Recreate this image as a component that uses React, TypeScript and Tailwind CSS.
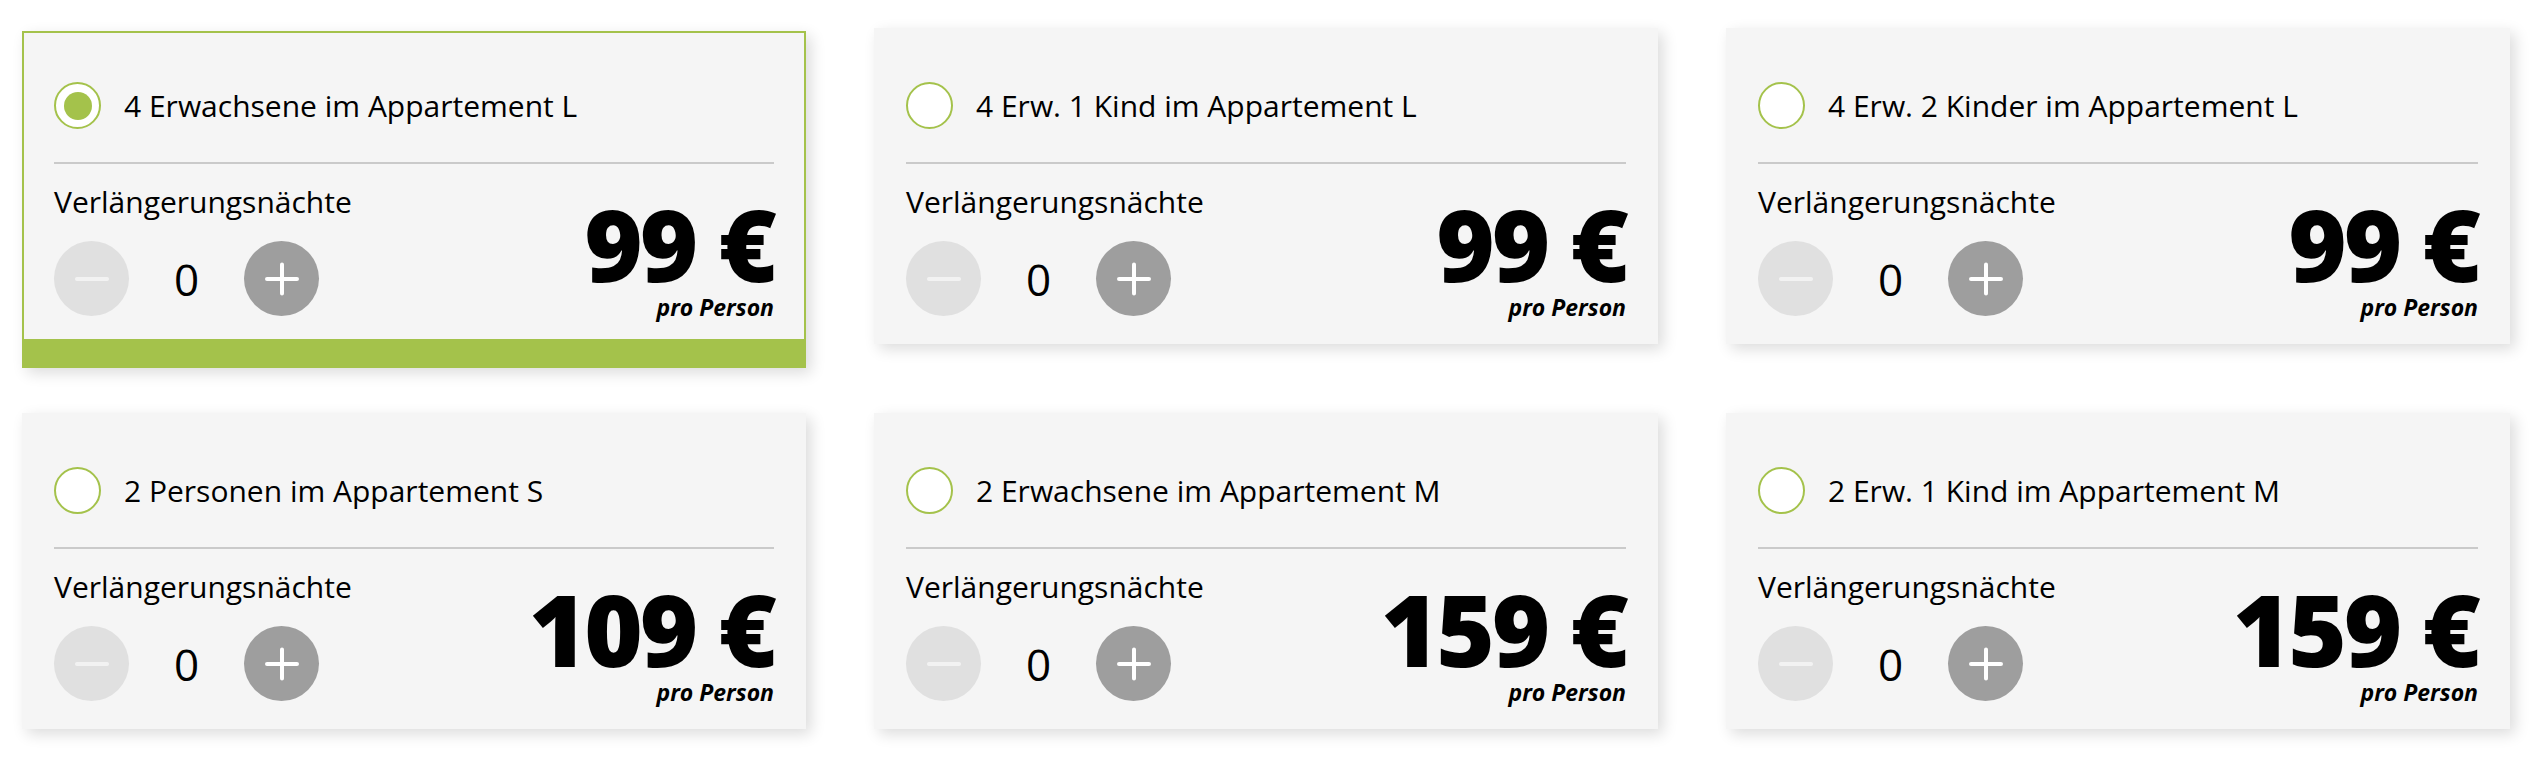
import React from "react";

type Offer = { label: string; price: number; selected?: boolean };

const offers: Offer[] = [
  { label: "4 Erwachsene im Appartement L", price: 99, selected: true },
  { label: "4 Erw. 1 Kind im Appartement L", price: 99 },
  { label: "4 Erw. 2 Kinder im Appartement L", price: 99 },
  { label: "2 Personen im Appartement S", price: 109 },
  { label: "2 Erwachsene im Appartement M", price: 159 },
  { label: "2 Erw. 1 Kind im Appartement M", price: 159 },
];

function Radio({ checked }: { checked?: boolean }) {
  return (
    <span className="flex h-[47px] w-[47px] shrink-0 items-center justify-center rounded-full border-2 border-[#a4c24b] bg-white">
      {checked && <span className="h-[28px] w-[28px] rounded-full bg-[#a4c24b]" />}
    </span>
  );
}

function MinusIcon() {
  return (
    <svg width="34" height="34" viewBox="0 0 34 34" fill="none">
      <path d="M2 17h30" stroke="#f2f2f2" strokeWidth="4" strokeLinecap="round" />
    </svg>
  );
}

function PlusIcon() {
  return (
    <svg width="34" height="34" viewBox="0 0 34 34" fill="none">
      <path d="M2 17h30M17 2.5v29" stroke="#ffffff" strokeWidth="4" strokeLinecap="round" />
    </svg>
  );
}

function CardBody({ offer }: { offer: Offer }) {
  return (
    <>
      <div className="flex h-[47px] items-center gap-[23px]">
        <Radio checked={offer.selected} />
        <span className="text-[30px] leading-[40px] text-black">{offer.label}</span>
      </div>
      <div className="mt-[33px] h-[2px] bg-[#cacaca]" />
      <div className="flex justify-between">
        <div className="flex flex-col">
          <div className="mt-[18px] text-[30px] leading-[40px] text-black">Verlängerungsnächte</div>
          <div className="mt-[19px] flex items-center">
            <button className="flex h-[75px] w-[75px] items-center justify-center rounded-full bg-[#e0e0e0]">
              <MinusIcon />
            </button>
            <span className="w-[115px] text-center text-[44px] leading-[60px] text-black">0</span>
            <button className="flex h-[75px] w-[75px] items-center justify-center rounded-full bg-[#9e9e9e]">
              <PlusIcon />
            </button>
          </div>
        </div>
        <div className="mt-[29px] flex flex-col items-end">
          <div className="text-[100px] font-extrabold leading-[100px] tracking-[-3px] text-black">
            {offer.price} €
          </div>
          <div className="text-[23px] font-bold italic leading-[28px] text-black">pro Person</div>
        </div>
      </div>
    </>
  );
}

export default function App() {
  return (
    <div className="min-h-[758px] bg-white font-['Open_Sans',sans-serif]">
      <div className="grid grid-cols-[repeat(3,784px)] grid-rows-[316px_316px] gap-x-[68px] gap-y-[69px] px-[22px] pt-[28px]">
        {offers.map((o, i) =>
          o.selected ? (
            <div
              key={i}
              className="mt-[3px] flex h-[337px] flex-col self-start border-x-2 border-t-2 border-b-[29px] border-[#a4c24b] bg-[#f5f5f5] px-[30px] pt-[49px] shadow-[5px_5px_14px_rgba(0,0,0,0.14)]"
            >
              <CardBody offer={o} />
            </div>
          ) : (
            <div
              key={i}
              className="flex h-[316px] flex-col bg-[#f5f5f5] px-[32px] pt-[54px] shadow-[5px_5px_14px_rgba(0,0,0,0.14)]"
            >
              <CardBody offer={o} />
            </div>
          )
        )}
      </div>
    </div>
  );
}
